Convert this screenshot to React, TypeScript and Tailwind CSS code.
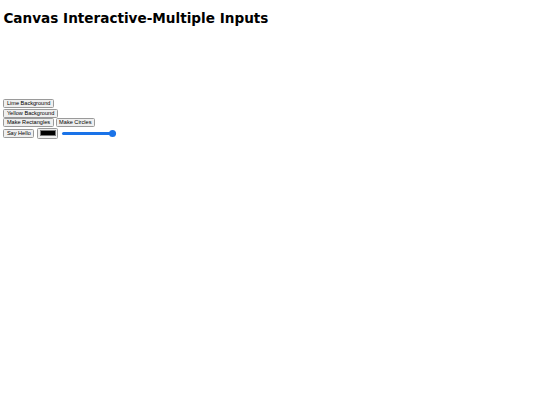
export default function App() {
  const btn =
    "inline-flex h-[9px] items-center rounded-[1.5px] border border-[#9a9a9a] bg-[#efefef] px-[2.5px] py-0 text-[5.6px] leading-[7px] text-black [font-family:'Liberation_Sans',Arial,sans-serif]"

  return (
    <div className="min-h-[405px] w-[540px] bg-white px-[3.4px] text-black">
      <h1 className="pt-[10px] text-[13.6px] font-bold leading-[16px] [font-family:'DejaVu_Sans',Verdana,sans-serif]">
        Canvas Interactive-Multiple Inputs
      </h1>

      {/* empty canvas area */}
      <div className="mt-[8px] h-[63px] w-[126px]" />

      <div className="mt-[2px] flex flex-col items-start gap-[0.5px]">
        <button type="button" className={btn}>
          Lime Background
        </button>
        <button type="button" className={btn}>
          Yellow Background
        </button>
        <div className="flex gap-[2px]">
          <button type="button" className={btn}>
            Make Rectangles
          </button>
          <button type="button" className={btn}>
            Make Circles
          </button>
        </div>
        <div className="flex items-center gap-[3px]">
          <button type="button" className={btn}>
            Say Hello
          </button>
          <div className="flex h-[11px] w-[21px] items-center justify-center rounded-[1.5px] border border-[#9a9a9a] bg-[#efefef]">
            <div className="h-[6px] w-[16px] border border-[#777] bg-black" />
          </div>
          <div className="relative ml-[1px] flex h-[7px] w-[54px] items-center">
            <div className="h-[3px] w-full rounded-full bg-[#1a73e8]" />
            <div className="absolute right-0 h-[7px] w-[7px] rounded-full bg-[#1a73e8]" />
          </div>
        </div>
      </div>
    </div>
  )
}
